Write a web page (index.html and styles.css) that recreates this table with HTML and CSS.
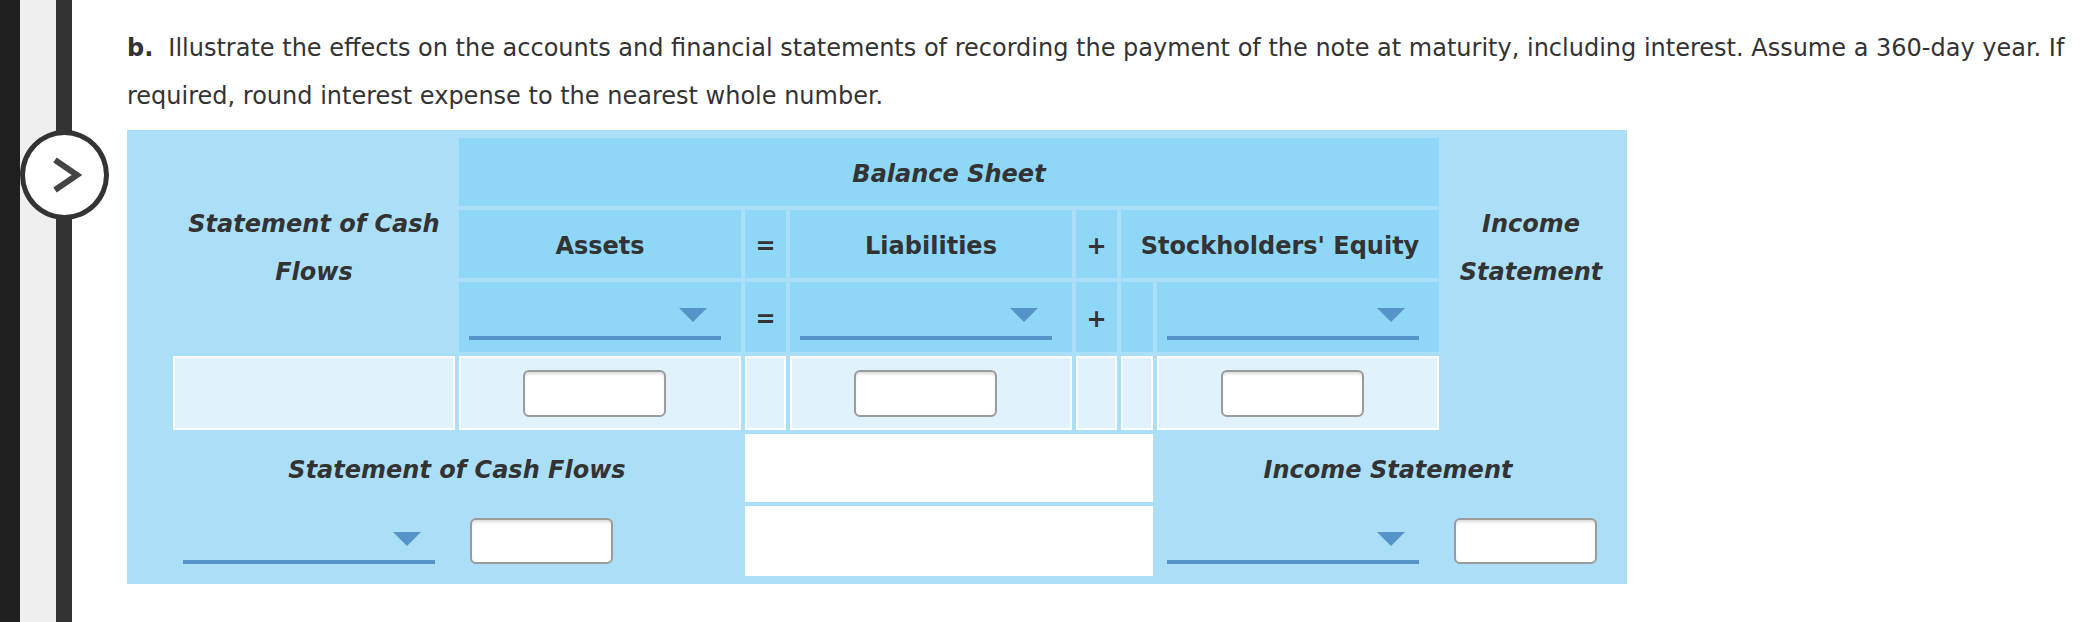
FILE: index.html
```html
<!DOCTYPE html>
<html lang="en">
<head>
<meta charset="utf-8">
<title>Effects of note payment</title>
<link rel="stylesheet" href="styles.css">
</head>
<body>
<div class="page">
  <div class="rail"><span class="rail-a"></span><span class="rail-b"></span><span class="rail-c"></span></div>
  <button class="nav-toggle" type="button" aria-label="Open panel">
    <svg width="79" height="80" viewBox="0 0 79 80"><polyline points="30,25 52,40 30,55" fill="none" stroke="#444" stroke-width="6"/></svg>
  </button>
  <main class="main">
    <p class="prompt"><b class="part">b.</b>Illustrate the effects on the accounts and financial statements of recording the payment of the note at maturity, including interest. Assume a 360-day year. If required, round interest expense to the nearest whole number.</p>

    <div class="sheet">
      <div class="side-head scf-head">Statement of Cash Flows</div>
      <div class="hd bs-head">Balance Sheet</div>
      <div class="hd c-assets r2">Assets</div>
      <div class="hd op c-eq r2">=</div>
      <div class="hd c-liab r2">Liabilities</div>
      <div class="hd op c-plus r2">+</div>
      <div class="hd se-head r2">Stockholders' Equity</div>
      <div class="side-head is-head">Income Statement</div>

      <div class="hd dd-cell c-assets r3"><div class="dd"><span class="caret"></span></div></div>
      <div class="hd op c-eq r3">=</div>
      <div class="hd dd-cell c-liab r3"><div class="dd"><span class="caret"></span></div></div>
      <div class="hd op c-plus r3">+</div>
      <div class="hd c-gap r3"></div>
      <div class="hd dd-cell c-se r3"><div class="dd"><span class="caret"></span></div></div>

      <div class="val c-scf r4"></div>
      <div class="val in-cell c-assets r4"><input class="num" type="text"></div>
      <div class="val c-eq r4"></div>
      <div class="val in-cell c-liab r4"><input class="num" type="text"></div>
      <div class="val c-plus r4"></div>
      <div class="val c-gap r4"></div>
      <div class="val in-cell c-se r4"><input class="num" type="text"></div>

      <div class="foot-label scf-foot">Statement of Cash Flows</div>
      <div class="blank r5"></div>
      <div class="foot-label is-foot">Income Statement</div>

      <div class="dd-cell c-scf r6"><div class="dd"><span class="caret"></span></div></div>
      <div class="left-in c-assets r6"><input class="num small" type="text"></div>
      <div class="blank r6"></div>
      <div class="dd-cell c-se r6"><div class="dd"><span class="caret"></span></div></div>
      <div class="left-in c-is r6"><input class="num small" type="text"></div>
    </div>
  </main>
</div>
</body>
</html>
```

FILE: styles.css
```css
html, body {
  margin: 0;
  background: #fff;
}
body {
  font-family: "DejaVu Sans", Verdana, sans-serif;
  color: #333;
}
.page {
  position: relative;
  display: flex;
  min-height: 622px;
}
.rail {
  display: flex;
  flex: none;
  width: 72px;
}
.rail-a { width: 20px; background: #1f1f1f; }
.rail-b { width: 36px; background: #efefef; }
.rail-c { width: 16px; background: #333; }

.nav-toggle {
  position: absolute;
  left: 20px;
  top: 130px;
  width: 89px;
  height: 90px;
  box-sizing: border-box;
  padding: 0;
  border: 5px solid #333;
  border-radius: 50%;
  background: #fff;
}
.nav-toggle svg { display: block; }

.main {
  padding: 24px 0 0 55px;
}
.prompt {
  margin: 0;
  width: 1962px;
  font-size: 24px;
  line-height: 48px;
}
.part { margin-right: 15px; }

.sheet {
  margin-top: 10px;
  width: 1500px;
  box-sizing: border-box;
  padding: 8px;
  background: #abdff8;
  display: grid;
  grid-template-columns: 34px 282px 282px 41px 282px 41px 32px 282px 176px;
  grid-template-rows: 68px 68px 70px 74px 68px 70px;
  gap: 4px;
  font-size: 24px;
  font-weight: bold;
}

.hd {
  background: #8ed7f6;
  display: flex;
  align-items: center;
  justify-content: center;
  padding-top: 4px;
}
.side-head, .foot-label {
  display: flex;
  align-items: center;
  justify-content: center;
  text-align: center;
  font-style: italic;
  line-height: 48px;
}
.bs-head { grid-column: 3 / 9; grid-row: 1; font-style: italic; }
.scf-head { grid-column: 2; grid-row: 1 / 4; padding-top: 6px; }
.is-head { grid-column: 9; grid-row: 1 / 4; padding-top: 6px; }
.se-head { grid-column: 7 / 9; }

.r2 { grid-row: 2; }
.r3 { grid-row: 3; }
.r4 { grid-row: 4; }
.r5 { grid-row: 5; }
.r6 { grid-row: 6; }
.c-scf { grid-column: 2; }
.c-assets { grid-column: 3; }
.c-eq { grid-column: 4; }
.c-liab { grid-column: 5; }
.c-plus { grid-column: 6; }
.c-gap { grid-column: 7; }
.c-se { grid-column: 8; }
.c-is { grid-column: 9; }

.dd-cell {
  display: block;
  padding: 26px 20px 0 10px;
}
.dd {
  height: 28px;
  border-bottom: 4px solid #5594c8;
  display: flex;
  justify-content: flex-end;
  align-items: flex-start;
}
.caret {
  width: 0;
  height: 0;
  margin-right: 14px;
  border-left: 14px solid transparent;
  border-right: 14px solid transparent;
  border-top: 14px solid #5594c8;
}

.val {
  background: #e0f3fc;
  border: 2px solid #fff;
}
.in-cell {
  display: flex;
  align-items: center;
  justify-content: center;
  padding-right: 12px;
}
.num {
  box-sizing: border-box;
  width: 143px;
  height: 47px;
  margin: 0;
  padding: 0 8px;
  border: 2px solid #9b9b9b;
  border-radius: 6px;
  background: #fff;
  box-shadow: inset 0 3px 3px -1px rgba(0, 0, 0, 0.14);
  font: 20px "DejaVu Sans", sans-serif;
}
.num.small { height: 46px; }

.scf-foot { grid-column: 2 / 4; grid-row: 5; padding-top: 4px; }
.is-foot { grid-column: 8 / 10; grid-row: 5; padding-top: 4px; }
.blank {
  grid-column: 4 / 8;
  background: #fff;
}
.left-in {
  display: flex;
  align-items: center;
  padding-left: 11px;
}
```
